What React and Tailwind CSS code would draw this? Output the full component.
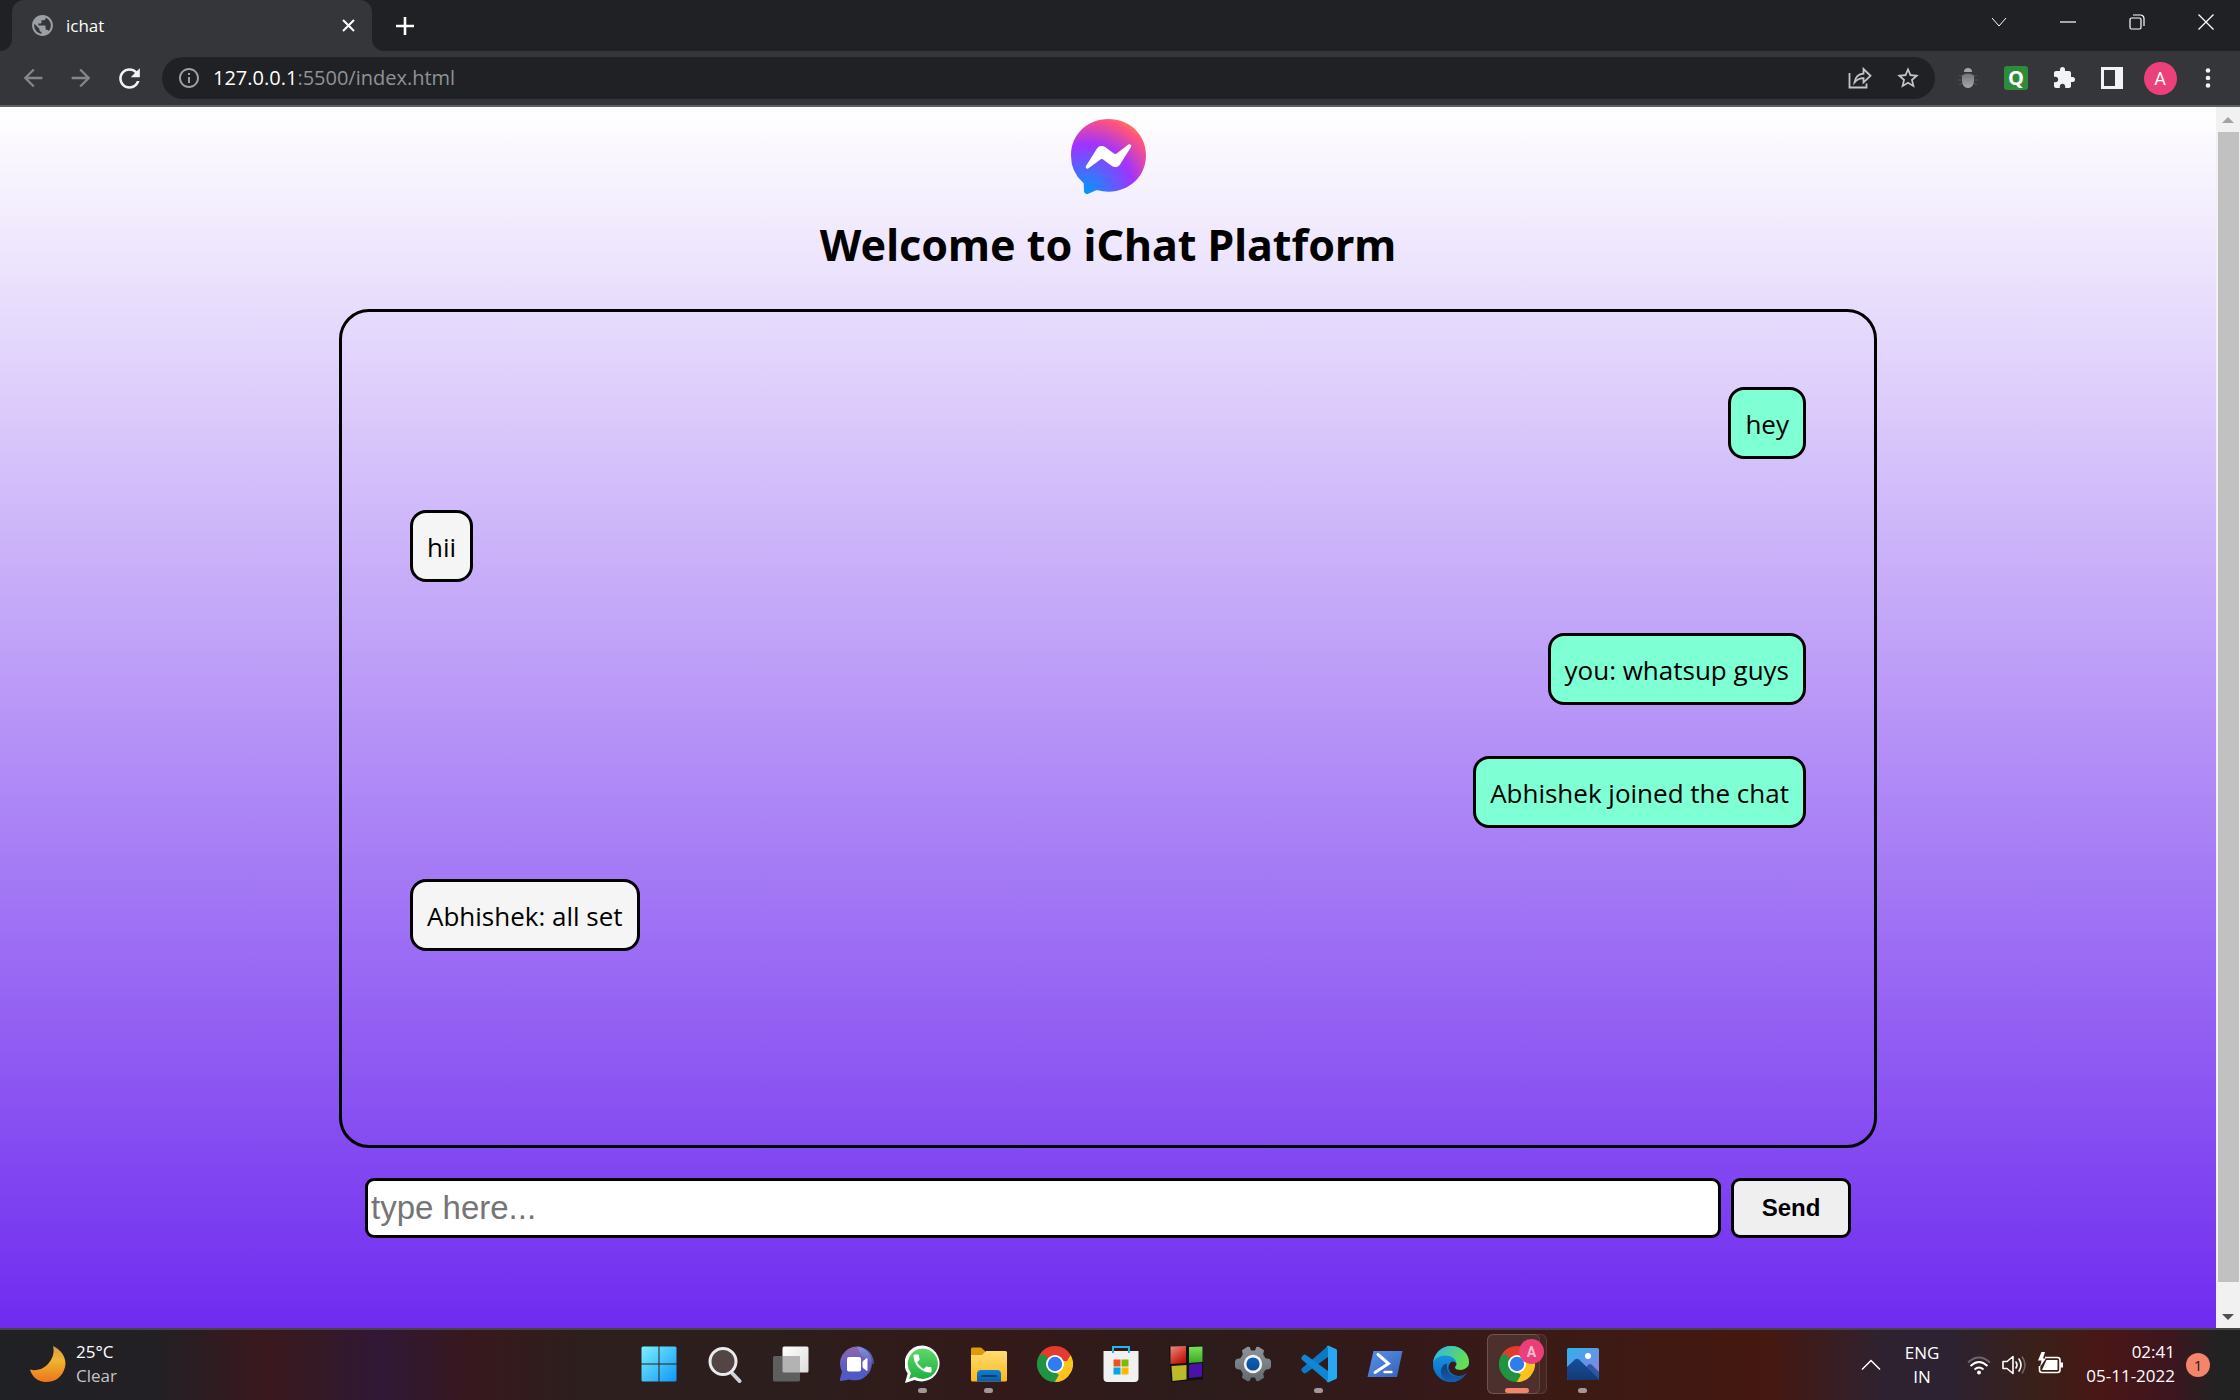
import React from "react";

const messages = [
  { text: "hey", side: "right" },
  { text: "hii", side: "left" },
  { text: "you: whatsup guys", side: "right" },
  { text: "Abhishek joined the chat", side: "right" },
  { text: "Abhishek: all set", side: "left" },
];

function Glyph({ d, size = 24, className = "" }) {
  return (
    <svg width={size} height={size} viewBox="0 0 24 24" fill="currentColor" className={className} aria-hidden="true">
      <path d={d} />
    </svg>
  );
}

function Line({ size = 16, box = 16, width = 1, className = "", children }) {
  return (
    <svg
      width={size}
      height={size}
      viewBox={`0 0 ${box} ${box}`}
      fill="none"
      stroke="currentColor"
      strokeWidth={width}
      className={className}
      aria-hidden="true"
    >
      {children}
    </svg>
  );
}

const GLOBE =
  "M12 2C6.48 2 2 6.48 2 12s4.48 10 10 10 10-4.48 10-10S17.52 2 12 2zm-1 17.93c-3.95-.49-7-3.85-7-7.93 0-.62.08-1.21.21-1.79L9 15v1c0 1.1.9 2 2 2v1.93zm6.9-2.54c-.26-.81-1-1.39-1.9-1.39h-1v-3c0-.55-.45-1-1-1H8v-2h2c.55 0 1-.45 1-1V7h2c1.1 0 2-.9 2-2v-.41c2.93 1.19 5 4.06 5 7.41 0 2.08-.8 3.97-2.1 5.39z";
const BACK = "M20 11H7.83l5.59-5.59L12 4l-8 8 8 8 1.41-1.41L7.83 13H20v-2z";
const FORWARD = "M12 4l-1.41 1.41L16.17 11H4v2h12.17l-5.58 5.59L12 20l8-8z";
const RELOAD =
  "M17.65 6.35C16.2 4.9 14.21 4 12 4c-4.42 0-7.99 3.58-7.99 8s3.57 8 7.99 8c3.73 0 6.84-2.55 7.73-6h-2.08c-.82 2.33-3.04 4-5.65 4-3.31 0-6-2.69-6-6s2.69-6 6-6c1.66 0 3.14.69 4.22 1.78L13 11h7V4l-2.35 2.35z";
const INFO =
  "M11 7h2v2h-2zm0 4h2v6h-2zm1-9C6.48 2 2 6.48 2 12s4.48 10 10 10 10-4.48 10-10S17.52 2 12 2zm0 18c-4.41 0-8-3.59-8-8s3.59-8 8-8 8 3.59 8 8-3.59 8-8 8z";
const STAR =
  "M22 9.24l-7.19-.62L12 2 9.19 8.63 2 9.24l5.46 4.73L5.82 21 12 17.27 18.18 21l-1.63-7.03L22 9.24zM12 15.4l-3.76 2.27 1-4.28-3.32-2.88 4.38-.38L12 6.1l1.71 4.04 4.38.38-3.32 2.88 1 4.28L12 15.4z";
const PUZZLE =
  "M20.5 11H19V7c0-1.1-.9-2-2-2h-4V3.5a2.5 2.5 0 0 0-5 0V5H4c-1.1 0-1.99.9-1.99 2v3.8H3.5c1.49 0 2.7 1.21 2.7 2.7s-1.21 2.7-2.7 2.7H2V20c0 1.1.9 2 2 2h3.8v-1.5c0-1.49 1.21-2.7 2.7-2.7 1.49 0 2.7 1.21 2.7 2.7V22H17c1.1 0 2-.9 2-2v-4h1.5a2.5 2.5 0 0 0 0-5z";
const PHONE =
  "M6.62 10.79c1.44 2.83 3.76 5.14 6.59 6.59l2.2-2.2c.27-.27.67-.36 1.02-.24 1.12.37 2.33.57 3.57.57.55 0 1 .45 1 1V20c0 .55-.45 1-1 1-9.39 0-17-7.61-17-17 0-.55.45-1 1-1h3.5c.55 0 1 .45 1 1 0 1.25.2 2.45.57 3.57.11.35.03.74-.25 1.02l-2.2 2.2z";

function BrowserTabs() {
  return (
    <div className="flex h-[51px] bg-[#35363a]">
      <div className="w-3 rounded-br-xl bg-[#202124]" />
      <div className="flex w-[360px] bg-[#202124]">
        <div className="flex flex-1 items-center rounded-t-xl bg-[#35363a] pr-3 pl-[18px]">
          <Glyph d={GLOBE} size={25} className="text-[#9aa0a6]" />
          <span className="ml-[11px] flex-1 text-[17px] text-white">ichat</span>
          <button type="button" aria-label="Close tab" className="flex size-6 items-center justify-center text-white">
            <Line size={13} box={13} width={2}>
              <path d="M1 1l11 11M12 1L1 12" />
            </Line>
          </button>
        </div>
      </div>
      <div className="flex flex-1 items-center justify-between rounded-bl-xl bg-[#202124]">
        <button type="button" aria-label="New tab" className="ml-[21px] flex size-6 items-center justify-center text-white">
          <Line size={18} box={18} width={2.6}>
            <path d="M9 0v18M0 9h18" />
          </Line>
        </button>
        <div className="flex pb-2 text-white">
          <button type="button" aria-label="Search tabs" className="flex h-9 w-[69px] items-center justify-center">
            <Line size={16} width={1}>
              <path d="M1 4l7 8 7-8" />
            </Line>
          </button>
          <button type="button" aria-label="Minimize" className="flex h-9 w-[69px] items-center justify-center">
            <Line size={16} width={1.2}>
              <path d="M0 8h16" />
            </Line>
          </button>
          <button type="button" aria-label="Restore" className="flex h-9 w-[69px] items-center justify-center">
            <Line size={16} width={1.2}>
              <rect x="1" y="4" width="11" height="11" rx="1.5" />
              <path d="M4 1h7.5a3.5 3.5 0 0 1 3.5 3.5V12" />
            </Line>
          </button>
          <button type="button" aria-label="Close window" className="flex h-9 w-[69px] items-center justify-center">
            <Line size={16} width={1.3}>
              <path d="M.5.5l15 15M15.500.5l-15 15" />
            </Line>
          </button>
        </div>
      </div>
    </div>
  );
}

function Tool({ label, children }) {
  return (
    <button type="button" aria-label={label} className="flex h-10 w-12 items-center justify-center">
      {children}
    </button>
  );
}

function Toolbar() {
  return (
    <div className="flex h-14 items-center border-b-2 border-[#5f6065] bg-[#35363a] pr-2 pl-[9px]">
      <Tool label="Back">
        <Glyph d={BACK} size={28} className="text-[#85868a]" />
      </Tool>
      <Tool label="Forward">
        <Glyph d={FORWARD} size={28} className="text-[#85868a]" />
      </Tool>
      <Tool label="Reload">
        <Glyph d={RELOAD} size={31} className="text-[#f1f3f4]" />
      </Tool>
      <div className="mr-[9px] ml-[9px] flex h-[42px] flex-1 items-center rounded-full bg-[#202124] pr-[3px] pl-[15px]">
        <Glyph d={INFO} size={24} className="text-[#9aa0a6]" />
        <span className="ml-3 flex-1 text-[20px] text-[#8f9296]">
          <span className="text-white">127.0.0.1</span>:5500/index.html
        </span>
        <Tool label="Share">
          <Line size={24} box={24} width={1.8} className="text-[#c4c5c8]">
            <path d="M1.500 7v14.500h17V17.500" />
            <path d="M6.500 16.500c.8-5.500 4-8.500 9-8.900V3l7 6.800-7 6.700v-4.300c-3.800.1-6.700 1.500-9 4.300z" />
          </Line>
        </Tool>
        <Tool label="Bookmark">
          <Glyph d={STAR} size={26} className="text-[#c4c5c8]" />
        </Tool>
      </div>
      <Tool label="Debugger extension">
        <svg width="22" height="22" viewBox="0 0 22 22" aria-hidden="true">
          <defs>
            <Grad id="bug" from="#747474" to="#a8a8a8" />
          </defs>
          <path d="M2 8l4 2M20 8l-4 2M1 13h4M21 13h-4M2 18l4-2M20 18l-4-2" stroke="#505154" strokeWidth="1" />
          <path d="M7 5q0-4 4-4t4 4z" fill="#a5a5a5" />
          <path d="M5 9q1-2.500 6-2.500T17 9v4.500c0 4.500-2.500 7.500-6 7.500s-6-3-6-7.500z" fill="url(#bug)" />
        </svg>
      </Tool>
      <Tool label="Q extension">
        <span className="flex size-6 items-center justify-center rounded-[3px] bg-[#2f8a3c] text-[20px] leading-none font-bold text-white">
          Q
        </span>
      </Tool>
      <Tool label="Extensions">
        <Glyph d={PUZZLE} size={24} className="text-[#f1f3f4]" />
      </Tool>
      <Tool label="Side panel">
        <svg width="22" height="22" viewBox="0 0 22 22" aria-hidden="true">
          <path fillRule="evenodd" d="M0 0h22v22H0zM3 3v16h11V3z" fill="#f1f3f4" />
        </svg>
      </Tool>
      <Tool label="Profile">
        <span className="flex size-[33px] items-center justify-center rounded-full bg-[#ec407a] font-[Roboto] text-[18px] text-white">
          A
        </span>
      </Tool>
      <Tool label="Menu">
        <svg width="6" height="20" viewBox="0 0 6 20" fill="#f1f3f4" aria-hidden="true">
          <circle cx="3" cy="2.500" r="2.300" />
          <circle cx="3" cy="10" r="2.300" />
          <circle cx="3" cy="17.500" r="2.300" />
        </svg>
      </Tool>
    </div>
  );
}

function MessengerLogo() {
  return (
    <svg width="75" height="75" viewBox="0 0 24 24" role="img" aria-label="iChat logo">
      <defs>
        <radialGradient id="messenger" cx="4.600" cy="23.900" r="26" gradientUnits="userSpaceOnUse">
          <stop offset="0" stopColor="#0099ff" />
          <stop offset=".61" stopColor="#a033ff" />
          <stop offset=".93" stopColor="#ff5280" />
          <stop offset="1" stopColor="#ff7061" />
        </radialGradient>
      </defs>
      <path d="M4 7h16v10H4z" fill="#fff" />
      <path
        fill="url(#messenger)"
        d="M.001 11.639C.001 4.949 5.241 0 12.001 0S24 4.950 24 11.639c0 6.689-5.240 11.638-12 11.638-1.210 0-2.380-.16-3.470-.46a.96.96 0 0 0-.64.05l-2.390 1.050a.96.96 0 0 1-1.350-.85l-.07-2.140a.97.97 0 0 0-.32-.68A11.390 11.389 0 0 1 .002 11.640zm8.320-2.190l-3.520 5.600c-.35.53.32 1.139.82.75l3.790-2.870c.26-.2.6-.2.87 0l2.800 2.100c.84.63 2.040.4 2.600-.48l3.520-5.600c.35-.53-.32-1.130-.82-.75l-3.790 2.870c-.25.2-.6.2-.86 0l-2.800-2.100a1.800 1.800 0 0 0-2.610.48z"
      />
    </svg>
  );
}

function Bubble({ text, side }) {
  const look = side === "right" ? "self-end bg-[#7fffd4]" : "self-start bg-[#f5f5f5]";
  return (
    <p className={`rounded-2xl border-[3px] border-black px-[14px] pt-4 pb-[14px] text-[26px] leading-9 text-black ${look}`}>
      {text}
    </p>
  );
}

function ChatPage() {
  return (
    <main className="flex flex-1 flex-col items-center bg-[linear-gradient(180deg,#ffffff,#6f2bef)] pt-3 pb-[90px]">
      <MessengerLogo />
      <h1 className="mt-[19px] mb-8 font-['Noto_Sans'] text-[43px] leading-[64px] font-bold text-black">
        Welcome to iChat Platform
      </h1>
      <section
        aria-label="Messages"
        className="flex min-h-[839px] w-full max-w-[1538px] flex-col gap-[51px] rounded-[30px] border-[3px] border-black px-[68px] pt-[75px]"
      >
        {messages.map((m) => (
          <Bubble key={m.text} {...m} />
        ))}
      </section>
      <form onSubmit={(e) => e.preventDefault()} className="mt-[30px] flex w-full max-w-[1486px] gap-[10px]">
        <input
          type="text"
          aria-label="Message"
          placeholder="type here..."
          className="h-[60px] min-w-0 flex-1 rounded-[9px] border-[3px] border-black bg-white px-[3px] font-['Liberation_Sans'] text-[33px] text-black placeholder:text-[#757575]"
        />
        <button
          type="submit"
          className="h-[60px] w-[120px] rounded-[9px] border-[3px] border-black bg-[#efefef] font-['Liberation_Sans'] text-[24px] font-bold text-black"
        >
          Send
        </button>
      </form>
    </main>
  );
}

function Scrollbar() {
  return (
    <div className="flex w-6 flex-col items-center bg-[#f1f1f1]">
      <div className="flex h-[25px] items-center">
        <svg width="12" height="6" viewBox="0 0 12 6" aria-hidden="true">
          <path d="M0 6l6-6 6 6z" fill="#a3a3a3" />
        </svg>
      </div>
      <div className="w-[21px] flex-1 bg-[#c1c1c1]" />
      <div className="flex h-[46px] items-end pb-2">
        <svg width="12" height="6" viewBox="0 0 12 6" aria-hidden="true">
          <path d="M0 0l6 6 6-6z" fill="#505050" />
        </svg>
      </div>
    </div>
  );
}

function Grad({ id, from, to, x2 = 0, y2 = 1 }) {
  return (
    <linearGradient id={id} x1="0" y1="0" x2={x2} y2={y2}>
      <stop offset="0" stopColor={from} />
      <stop offset="1" stopColor={to} />
    </linearGradient>
  );
}

function Art({ children }) {
  return (
    <svg width="36" height="38" viewBox="0 0 36 38" aria-hidden="true">
      {children}
    </svg>
  );
}

function ChromeArt() {
  return (
    <Art>
      <path d="M18 19L2.410 10A18 18 0 0 1 33.590 10z" fill="#e33b2e" />
      <path d="M18 19L33.590 10A18 18 0 0 1 18 37z" fill="#fcc31e" />
      <path d="M18 19V37A18 18 0 0 1 2.410 10z" fill="#229342" />
      <path d="M18 10h15.590L30 16H18z" fill="#e33b2e" />
      <path d="M10.200 23.500L2.410 10l5.200-.5L14 17z" fill="#229342" />
      <path d="M25.800 23.500L18 37l-3-7 7-8z" fill="#fcc31e" />
      <path d="M10.200 23.500L18 27l4 3-4 7z" fill="#229342" />
      <path d="M25.800 23.500L18 37q5 0 8-3l4-16z" fill="#fcc31e" />
      <circle cx="18" cy="19" r="9" fill="#fff" />
      <circle cx="18" cy="19" r="7.200" fill="#2f7cee" />
    </Art>
  );
}

const apps = [
  {
    name: "Start",
    art: (
      <Art>
        <defs>
          <Grad id="win" from="#7cf0fd" to="#0f97f5" x2={1} />
        </defs>
        <path d="M2 1.500h15.500v17H.5V3a1.500 1.500 0 0 1 1.500-1.500zM18.500 1.500H34A1.500 1.500 0 0 1 35.500 3v15.500h-17zM.5 19.500h17v17H2A1.500 1.500 0 0 1 .5 35zM18.500 19.500h17V35a1.500 1.500 0 0 1-1.500 1.500H18.500z" fill="url(#win)" />
      </Art>
    ),
  },
  {
    name: "Search",
    art: (
      <Art>
        <path d="M24 27l8.500 9" stroke="#cfd3d8" strokeWidth="4" strokeLinecap="round" />
        <circle cx="16" cy="16.500" r="13" fill="#534543" stroke="#e9ebee" strokeWidth="3" />
      </Art>
    ),
  },
  {
    name: "Task view",
    art: (
      <Art>
        <defs>
          <Grad id="tv" from="#ffffff" to="#dcdcdc" x2={1} />
        </defs>
        <rect x="9.500" y="1.500" width="26" height="26" rx="1.500" fill="url(#tv)" />
        <rect x="0" y="11" width="27" height="25.500" rx="1.500" fill="#5e5e5e" />
        <path d="M9.500 11H27v16.500H11a1.500 1.500 0 0 1-1.500-1.500z" fill="#b3b3b3" />
      </Art>
    ),
  },
  {
    name: "Chat",
    art: (
      <Art>
        <defs>
          <Grad id="teams" from="#8f67ad" to="#5159c6" y2={0.8} />
          <Grad id="teamsb" from="#7fa3ee" to="#5b5fd0" />
        </defs>
        <path d="M18 1.500a17 17 0 1 1-7.500 33L2 36q-1.500 0-1-2l2-7.500A17 17 0 0 1 18 1.500z" fill="url(#teams)" />
        <path d="M18 1.500a17 17 0 0 1 16.900 18Q22 14 18 1.500z" fill="url(#teamsb)" opacity=".7" />
        <rect x="8" y="12" width="14" height="14.500" rx="2" fill="#fff" />
        <path d="M24 16.500l4-3v12l-4-3z" fill="#fff" stroke="#fff" strokeLinejoin="round" />
      </Art>
    ),
  },
  {
    name: "WhatsApp",
    running: true,
    art: (
      <Art>
        <defs>
          <Grad id="wa" from="#60d66a" to="#1fb141" />
        </defs>
        <path d="M18 .5A18 18 0 1 1 9.500 35L0 38l2.700-9.500A18 18 0 0 1 18 .5z" fill="#fff" />
        <path d="M18 3.500a15.200 15.200 0 1 1-8 28.300L4 33.700 6 28A15.200 15.200 0 0 1 18 3.500z" fill="url(#wa)" />
        <path d={PHONE} fill="#fff" transform="translate(5.500 6.500)" />
      </Art>
    ),
  },
  {
    name: "File Explorer",
    running: true,
    art: (
      <Art>
        <defs>
          <Grad id="fe" from="#ffdc75" to="#fbb917" />
          <Grad id="feb" from="#0f7fd6" to="#0a5ca8" />
        </defs>
        <path d="M0 4a1.500 1.500 0 0 1 1.500-1.500H10l4 3.500v6H0z" fill="#dc9c05" />
        <path d="M0 10h11l4-4h19.500A1.500 1.500 0 0 1 36 7.500V35a1.500 1.500 0 0 1-1.500 1.500h-33A1.500 1.500 0 0 1 0 35z" fill="url(#fe)" />
        <path d="M6 36.500V29a4 4 0 0 1 4-4h16a4 4 0 0 1 4 4v7.500z" fill="url(#feb)" />
        <path d="M11 31h14" stroke="#073f7a" strokeWidth="2" strokeLinecap="round" />
      </Art>
    ),
  },
  { name: "Chrome", art: <ChromeArt /> },
  {
    name: "Microsoft Store",
    art: (
      <Art>
        <path d="M10 8V2h16v6" fill="none" stroke="#2bb4e8" strokeWidth="2" />
        <path d="M.5 6h35v27a4 4 0 0 1-4 4h-27a4 4 0 0 1-4-4z" fill="#f1f1f1" />
        <path d="M10 8V6M26 8V6" stroke="#2bb4e8" strokeWidth="2" />
        <path d="M10.500 14.500h7v7h-7z" fill="#f25022" />
        <path d="M18.500 14.500h7v7h-7z" fill="#7fba00" />
        <path d="M10.500 22.500h7v7h-7z" fill="#00a4ef" />
        <path d="M18.500 22.500h7v7h-7z" fill="#ffb900" />
      </Art>
    ),
  },
  {
    name: "Color blocks",
    art: (
      <Art>
        <defs>
          <Grad id="cbr" from="#f08a80" to="#bd1208" x2={0.6} />
          <Grad id="cbg" from="#7be05a" to="#3aa820" />
        </defs>
        <path d="M0 1.500l34-1v34L2 37z" fill="#111" />
        <path d="M1.500 1.500L17 1v17l-15.500 1z" fill="url(#cbr)" />
        <path d="M20 2l13.500-.5v15.500l-13.500 1z" fill="url(#cbg)" />
        <path d="M2.500 21L17.500 20v14.500L3.500 36z" fill="#bdb92c" />
        <path d="M20 19.500L33 18v13.500l-13 1.500z" fill="#4a12a8" />
      </Art>
    ),
  },
  {
    name: "Settings",
    art: (
      <Art>
        <defs>
          <Grad id="gear" from="#8d949b" to="#626a72" />
          <Grad id="gearb" from="#0d62b5" to="#0a4c96" />
        </defs>
        <path
          d="M12.500 1.800l2.200.3L16 5.500h4l1.300-3.400 2.200-.3 5.500 3.500-.8 4.200 2.300 3.800 4 .7L36 16v6l-1.500 2-4 .7-2.300 3.800.8 4.200-5.500 3.500-2.200-.3L20 32.500h-4l-1.300 3.400-2.200.3L7 32.700l.8-4.200-2.300-3.800-4-.7L0 22v-6l1.500-2 4-.7 2.300-3.800L7 5.300z"
          fill="url(#gear)"
        />
        <circle cx="18" cy="19" r="9.200" fill="#f1f1f1" />
        <circle cx="18" cy="19" r="6.600" fill="url(#gearb)" />
      </Art>
    ),
  },
  {
    name: "Visual Studio Code",
    running: true,
    art: (
      <Art>
        <path d="M27 1v11L5 28q-1.500 1-3-.5L.7 26q-1-1.500.3-2.800z" fill="#0b79c4" />
        <path d="M27 37V26L5 10q-1.500-1-3 .5L.7 12q-1 1.500.3 2.800z" fill="#1187d3" />
        <path d="M27 .5l8 3.500q1 .5 1 2v26q0 1.500-1 2l-8 3.500-1.500-1.500q1.500 0 1.500-2V4q0-2-1.500-2z" fill="#2aa7f2" />
      </Art>
    ),
  },
  {
    name: "PowerShell",
    art: (
      <Art>
        <defs>
          <Grad id="ps" from="#5b90e8" to="#3463b8" x2={1} />
        </defs>
        <path d="M6.500 6H35.500L30 32H.5z" fill="url(#ps)" />
        <path d="M11 9.500l10.500 9L8 27.500" fill="none" stroke="#fff" strokeWidth="3" strokeLinecap="round" />
        <path d="M17.500 27h7" stroke="#fff" strokeWidth="2.400" strokeLinecap="round" />
      </Art>
    ),
  },
  {
    name: "Edge",
    art: (
      <Art>
        <defs>
          <Grad id="edgea" from="#2bb6ea" to="#66e04f" x2={1} y2={0.5} />
          <Grad id="edgeb" from="#1c9fe6" to="#0a68c9" />
          <Grad id="edgec" from="#0c3f78" to="#165cad" />
        </defs>
        <circle cx="18" cy="19" r="18" fill="url(#edgeb)" />
        <path d="M14 18.500c-1.500 8 5 14 12 13q4-.5 7-3A18 18 0 0 1 18 37C9 36 6 28 9 22q1.500-3 5-3.500z" fill="url(#edgec)" />
        <path d="M0 18C1.500 8 9 1 18 1c10.500 0 18 8 18 15.500 0 5.500-4 8.500-8.500 8.500q-5.500 0-5.500-2.500c0-1 1.500-1.500 1.500-4C23.500 14 18 10.500 12 10.500 5 10.500 1 14.500 0 18z" fill="url(#edgea)" />
        <path d="M22 22.500q0 2.500 5.500 2.500 5 0 9-5v8h-3q-3 3-8 3-8-1-10-7-.5-5 3.500-7.500 4 0 4.500 3-1.500 1.500-1.500 3z" fill="#3a1a16" />
      </Art>
    ),
  },
  { name: "Chrome, profile A", active: true, badge: "A", art: <ChromeArt /> },
  {
    name: "Photos",
    running: true,
    art: (
      <Art>
        <defs>
          <Grad id="ph" from="#29b3ee" to="#8f7fe0" x2={0.8} />
          <Grad id="phm" from="#15509a" to="#123a75" />
        </defs>
        <rect x="2" y="3" width="32" height="32" rx="1.500" fill="url(#ph)" />
        <path d="M16 28l7-8q2-2 4 0l7 7v6.500a1.500 1.500 0 0 1-1.500 1.500H16z" fill="#2c57a8" />
        <path d="M2 22l8-7.500q2-1.500 4 0L34 34q-.5 1-1.500 1h-29A1.500 1.500 0 0 1 2 33.500z" fill="url(#phm)" />
        <circle cx="23" cy="11" r="3" fill="#fff" />
      </Art>
    ),
  },
];

function AppButton({ app }) {
  return (
    <button
      type="button"
      aria-label={app.name}
      className="relative flex h-[70px] w-[66px] items-center justify-center"
    >
      {app.active && (
        <>
          <span className="absolute top-1 left-[3px] h-[60px] w-[60px] rounded-md border border-white/10 bg-white/5" />
          <span className="absolute top-1 left-[3px] h-[60px] w-[53px] rounded-md border border-white/10 bg-white/5" />
        </>
      )}
      <span className="relative -mt-[2px]">{app.art}</span>
      {app.badge && (
        <span className="absolute top-[9px] left-[35px] flex size-[25px] items-center justify-center rounded-full bg-[#ec3f79] font-[Roboto] text-[14px] font-bold text-[#f8bcd0]">
          {app.badge}
        </span>
      )}
      {app.running && <span className="absolute bottom-[7px] left-7 h-[5px] w-[9px] rounded-full bg-[#a19897]" />}
      {app.active && <span className="absolute bottom-[7px] left-[21px] h-[5px] w-6 rounded-full bg-[#f4846a]" />}
    </button>
  );
}

function Taskbar() {
  return (
    <footer className="flex h-[72px] items-start border-t-2 border-[#484244] bg-[linear-gradient(90deg,#202124_0%,#232025_7%,#3a181e_12%,#351925_14%,#301836_17%,#38181e_21%,#2c1f1d_26%,#2c1e1c_35%,#33191a_45%,#2c1c1b_54%,#34191a_62%,#3c1a14_70%,#451811_79%,#2f2230_84%,#2c2232_87%,#3a2018_91%,#4a1616_94%,#3c1620_97%,#222222_99%)] text-[17px] leading-6 text-white">
      <div className="flex h-[70px] flex-1 items-center gap-[10px] pb-[2px] pl-[30px]">
        <svg width="36" height="36" viewBox="0 0 36 36" aria-hidden="true">
          <defs>
            <linearGradient id="moon" x1="0" y1="0" x2="0" y2="1">
              <stop offset="0" stopColor="#d99a4c" />
              <stop offset=".4" stopColor="#efb42f" />
              <stop offset="1" stopColor="#ee741c" />
            </linearGradient>
          </defs>
          <path d="M23 0c9 4 14 13 12 21-2.500 11-11 15-19 15C8 36 2 31 0 23.500c5 1.500 12 .5 17-4.500S25 7 23 0z" fill="url(#moon)" />
        </svg>
        <p>
          25°C
          <br />
          <span className="text-[#c6c4c6]">Clear</span>
        </p>
      </div>
      <nav aria-label="Apps" className="flex pl-[2px]">
        {apps.map((app) => (
          <AppButton key={app.name} app={app} />
        ))}
      </nav>
      <div className="flex h-[70px] flex-1 items-center justify-end pr-[30px]">
        <button type="button" aria-label="Show hidden icons" className="flex size-6 items-center justify-center">
          <Line size={20} box={20} width={1.5}>
            <path d="M1 14.500L10 5.500l9 9" />
          </Line>
        </button>
        <p className="ml-[22px] text-center">
          ENG
          <br />
          IN
        </p>
        <div className="ml-7 flex items-center gap-[11px]">
          <Line size={24} box={24} width={1.8}>
            <path d="M1 9.500q11-10 22 0" opacity=".3" />
            <path d="M3.500 13q8.500-8 17 0M7.500 16.500q4.500-4 9 0" />
            <circle cx="12" cy="19.500" r="2" fill="currentColor" stroke="none" />
          </Line>
          <Line size={24} box={24} width={1.6}>
            <path d="M1 8.500h4L11 3.500v17L5 15.500H1z" strokeLinejoin="round" />
            <path d="M14 9q2 3 0 6M17 6q4 6 0 12" strokeLinecap="round" />
            <path d="M20 3.500q6 8.500 0 17" opacity=".3" />
          </Line>
          <Line size={26} box={26} width={1.6}>
            <path d="M8 5.500h12.500a2.500 2.500 0 0 1 2.500 2.500v10a2.500 2.500 0 0 1-2.500 2.500H5A2.500 2.500 0 0 1 2.500 18v-4" />
            <path d="M9.500 8h11v10H5z" fill="currentColor" stroke="none" />
            <path d="M24.500 10.500v5" strokeWidth="3" />
            <path d="M4.500 0L1 8.500h3.500L3 15l6-8.500H6L8 0z" fill="currentColor" stroke="none" />
          </Line>
        </div>
        <p className="ml-[23px] pb-[2px] text-right">
          02:41
          <br />
          05-11-2022
        </p>
        <span className="ml-[11px] flex size-6 items-center justify-center rounded-full bg-[#f4846a] text-[15px] leading-none text-[#2a1512]">
          1
        </span>
      </div>
    </footer>
  );
}

export default function App() {
  return (
    <div className="flex min-h-screen flex-col font-['Open_Sans','Noto_Sans',sans-serif]">
      <header>
        <BrowserTabs />
        <Toolbar />
      </header>
      <div className="flex flex-1">
        <ChatPage />
        <Scrollbar />
      </div>
      <Taskbar />
    </div>
  );
}
